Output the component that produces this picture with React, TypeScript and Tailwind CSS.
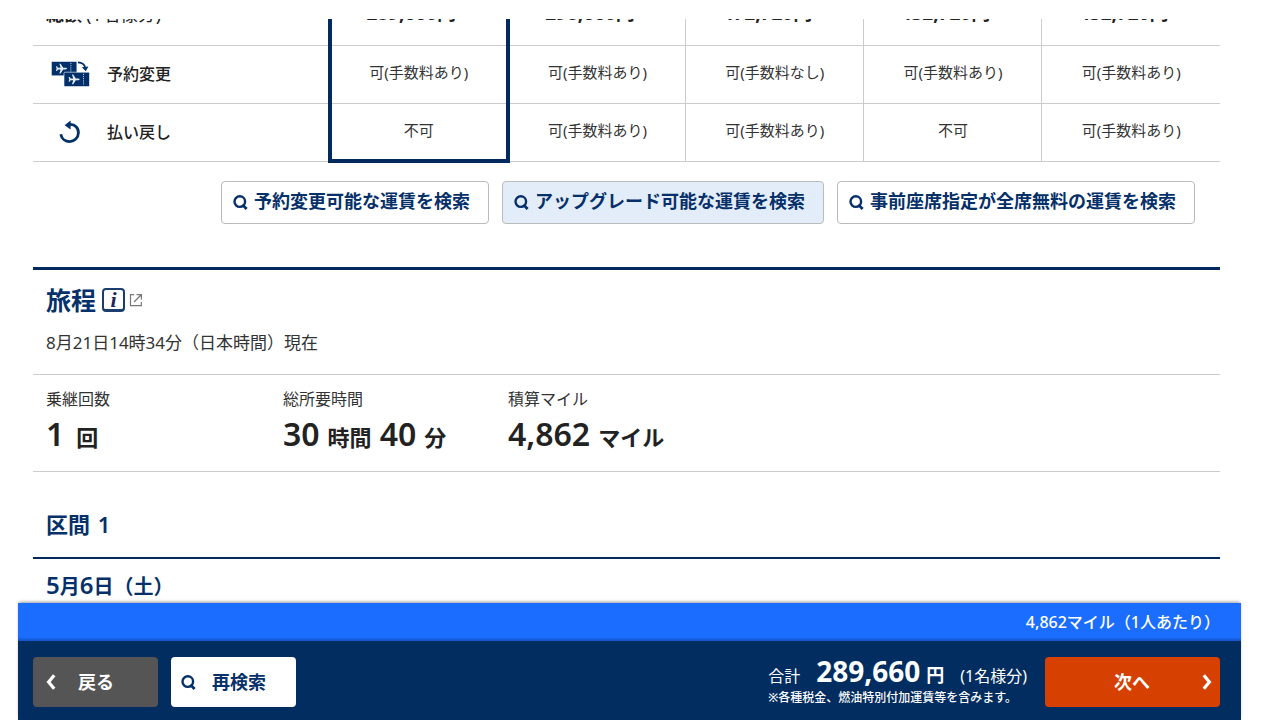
import clsx from "clsx";

type Fare = {
  price: string;
  change: string;
  refund: string;
};

const fares: Fare[] = [
  { price: "289,660円", change: "可(手数料あり)", refund: "不可" },
  { price: "298,660円", change: "可(手数料あり)", refund: "可(手数料あり)" },
  { price: "472,720円", change: "可(手数料なし)", refund: "可(手数料あり)" },
  { price: "432,720円", change: "可(手数料あり)", refund: "不可" },
  { price: "432,720円", change: "可(手数料あり)", refund: "可(手数料あり)" },
];

const searches = [
  { label: "予約変更可能な運賃を検索", active: false },
  { label: "アップグレード可能な運賃を検索", active: true },
  { label: "事前座席指定が全席無料の運賃を検索", active: false },
];

function SearchIcon() {
  return (
    <svg viewBox="0 0 15 15" className="size-[15px] shrink-0" fill="none" stroke="currentColor" aria-hidden="true">
      <circle cx="6.8" cy="6.6" r="5.3" strokeWidth="2.4" />
      <path d="M9.4 9.6 13.6 14" strokeWidth="2.8" />
    </svg>
  );
}

function Chevron({ left }: { left?: boolean }) {
  return (
    <svg viewBox="0 0 10 16" className="h-4 w-[10px] shrink-0" fill="none" stroke="currentColor" strokeWidth="3.2" aria-hidden="true">
      <path d={left ? "M8.2 1.2 2.6 8l5.6 6.8" : "M1.8 1.2 7.4 8l-5.6 6.8"} />
    </svg>
  );
}

function Ticket({ x, y }: { x: number; y: number }) {
  return (
    <g transform={`translate(${x} ${y})`}>
      <rect width="25.5" height="14.4" rx="1" fill="#03306a" stroke="#fff" strokeWidth="0.6" />
      <path d="M19.5 1.5v11.4" stroke="#b9c8dc" strokeWidth="1" strokeDasharray="1.2 1" />
      <path
        d="M15.6 7.2c0 .5-.7.8-1.5.8h-2.3l-2.6 4H8l1.2-4H6.6l-1 1.5h-1l.6-2.3-.6-2.3h1l1 1.5h2.6L8 2.4h1.2l2.6 4h2.3c.8 0 1.5.3 1.5.8z"
        fill="#e6edf6"
      />
    </g>
  );
}

function TicketsIcon() {
  return (
    <svg viewBox="0 0 39 26" className="h-[26px] w-[39px]" aria-hidden="true">
      <Ticket x={0.4} y={0.4} />
      <Ticket x={13} y={11.2} />
      <path d="M27 1.4c4 .2 6.6 2.2 7.2 5.4" fill="none" stroke="#03306a" strokeWidth="1.8" />
      <path d="M30.8 6.2 37.4 5.4 34.8 10.2z" fill="#03306a" />
    </svg>
  );
}

function RefundIcon() {
  return (
    <svg viewBox="0 0 22 24" className="h-6 w-[22px]" aria-hidden="true">
      <path
        d="M10.6 4.4c5.4-.4 9 3.6 8.8 8.6-.2 4.8-4 8.6-8.6 8.6-4.4 0-8.2-2.8-9-7.4"
        fill="none"
        stroke="#03306a"
        strokeWidth="2.8"
      />
      <path d="M5.6 5.2 11.6.4v9z" fill="#03306a" />
    </svg>
  );
}

function ExternalIcon() {
  return (
    <svg viewBox="0 0 14 14" className="size-[14px]" fill="none" stroke="#777" strokeWidth="1.2" aria-hidden="true">
      <path d="M5 1.6H1.5v11h10.8V9" />
      <path d="M5 9 12 2M7.6 1.6h4.8v4.8" />
    </svg>
  );
}

function FareRow({ title, note, icon, values, total, last }: {
  title: string;
  note?: string;
  icon?: React.ReactNode;
  values: string[];
  total?: boolean;
  last?: boolean;
}) {
  return (
    <tr className="h-[58px] border-b border-[#ccc]">
      <th scope="row" className={clsx("px-0 pt-0 text-left text-[#222]", total ? "pb-[3px] text-lg font-bold" : "pb-0 text-base font-medium")}>
        <div className={clsx("flex items-center", !icon && "pl-[13px]")}>
          {icon && <span className="flex w-[74px] justify-center">{icon}</span>}
          {title}
          {note && <span className="ml-1 font-normal">{note}</span>}
        </div>
      </th>
      {values.map((value, i) => (
        <td
          key={i}
          className={clsx(
            "pt-0 pl-0 text-center",
            total ? "pr-[15px] pb-[6px] text-[19px] font-bold text-[#222]" : "pr-0 pb-[3px] text-[15px]",
            i === 0 ? "border-x-4 border-[#022a5e]" : "border-r border-[#ccc] last:border-r-0",
            i === 0 && last && "border-b-4",
          )}
        >
          {value}
        </td>
      ))}
    </tr>
  );
}

function Stat({ label, className, children }: { label: string; className?: string; children: React.ReactNode }) {
  return (
    <div className={className}>
      <dt className="text-base leading-6">{label}</dt>
      <dd className="flex items-baseline gap-2 text-[22px] leading-[46px] font-bold text-[#222]">{children}</dd>
    </div>
  );
}

function Num({ children }: { children: React.ReactNode }) {
  return <span className="text-[32px] font-semibold">{children}</span>;
}

export default function App() {
  return (
    <div className="flex h-screen flex-col bg-white pt-[19px] pr-[39px] pl-[18px] font-['Noto_Sans','Noto_Sans_CJK_JP',sans-serif] text-[#333]">
      <main className="min-h-0 flex-1 overflow-hidden pr-[21px] pl-[15px]">
        <table className="-mt-8 w-full table-fixed border-collapse">
          <colgroup>
            <col className="w-1/4" />
            {fares.map((_, i) => (
              <col key={i} className="w-[15%]" />
            ))}
          </colgroup>
          <tbody>
            <FareRow title="総額" note="(1名様分)" values={fares.map((f) => f.price)} total />
            <FareRow title="予約変更" icon={<TicketsIcon />} values={fares.map((f) => f.change)} />
            <FareRow title="払い戻し" icon={<RefundIcon />} values={fares.map((f) => f.refund)} last />
          </tbody>
        </table>

        <div className="mt-[18px] flex justify-end gap-[13px] pr-[25px]">
          {searches.map(({ label, active }) => (
            <button
              key={label}
              type="button"
              className={clsx(
                "flex h-[43px] items-center gap-[6px] rounded border border-[#bbb] pr-[18px] pl-[11px] text-lg leading-8 font-bold whitespace-nowrap text-[#06306a]",
                active ? "bg-[#e3edf9]" : "bg-white",
              )}
            >
              <SearchIcon />
              <span className="pb-1">{label}</span>
            </button>
          ))}
        </div>

        <section className="mt-[43px] border-t-[3px] border-[#022a5e]">
          <div className="border-b border-[#ccc] px-[13px] pt-[10px] pb-[19px]">
            <h2 className="flex items-center text-[25px] leading-10 font-bold text-[#06306a]">
              旅程
              <a href="#itinerary" className="ml-[6px] flex items-center gap-1" aria-label="旅程">
                <span className="flex h-6 w-[23px] items-center justify-center rounded border-2 border-b-[3px] border-[#1c3d70] font-['Liberation_Serif',serif] text-[22px] leading-none font-bold text-[#22245a] italic">
                  i
                </span>
                <ExternalIcon />
              </a>
            </h2>
            <p className="mt-[11px] text-[17px] leading-6">8月21日14時34分（日本時間）現在</p>
          </div>
          <dl className="flex border-b border-[#ccc] px-[13px] pt-3 pb-[11px]">
            <Stat label="乗継回数" className="w-[237px]">
              <Num>1</Num>
              <span className="pl-1">回</span>
            </Stat>
            <Stat label="総所要時間" className="w-[225px]">
              <Num>30</Num>時間<Num>40</Num>分
            </Stat>
            <Stat label="積算マイル">
              <Num>4,862</Num>マイル
            </Stat>
          </dl>
        </section>

        <section className="pt-[34px] text-[#06306a]">
          <h3 className="border-b-2 border-[#022a5e] px-[13px] pb-[15px] text-[22px] leading-9 font-bold">
            区間 <span className="ml-[2px] font-semibold">1</span>
          </h3>
          <p className="px-[13px] pt-[10px] text-xl leading-9 font-bold">
            <span className="text-2xl font-semibold">5</span>月<span className="text-2xl font-semibold">6</span>日（土）
          </p>
        </section>
      </main>

      <footer className="relative text-white shadow-[0_-2px_3px_-1px_rgba(0,0,0,0.4)]">
        <p className="bg-[#1a6dff] bg-linear-to-t from-[#1353c6] to-[#1a6dff] to-10% pr-[21px] text-right text-base leading-[38px] font-medium">
          4,862マイル（1人あたり）
        </p>
        <div className="flex items-center bg-[#022d60] pt-4 pr-[21px] pb-[13px] pl-[15px]">
          <button type="button" className="flex h-[50px] w-[125px] items-center gap-[22px] rounded bg-[#555] pl-[13px] text-lg font-bold">
            <Chevron left />
            戻る
          </button>
          <button type="button" className="ml-[13px] flex h-[50px] w-[125px] items-center gap-4 rounded bg-white pl-[10px] text-lg font-bold text-[#06306a]">
            <SearchIcon />
            再検索
          </button>
          <div className="mr-[18px] ml-auto">
            <p className="flex items-baseline text-base leading-[26px]">
              <span>合計</span>
              <strong className="ml-4 text-[28px]">289,660</strong>
              <strong className="ml-[6px] text-lg leading-[26px]">円</strong>
              <span className="ml-4">(1名様分)</span>
            </p>
            <p className="text-xs leading-[18px] font-medium">※各種税金、燃油特別付加運賃等を含みます。</p>
          </div>
          <button type="button" className="flex h-[50px] w-[175px] items-center rounded bg-[#d64000] pr-2 text-lg font-bold">
            <span className="flex-1 pl-[17px]">次へ</span>
            <Chevron />
          </button>
        </div>
      </footer>
    </div>
  );
}
